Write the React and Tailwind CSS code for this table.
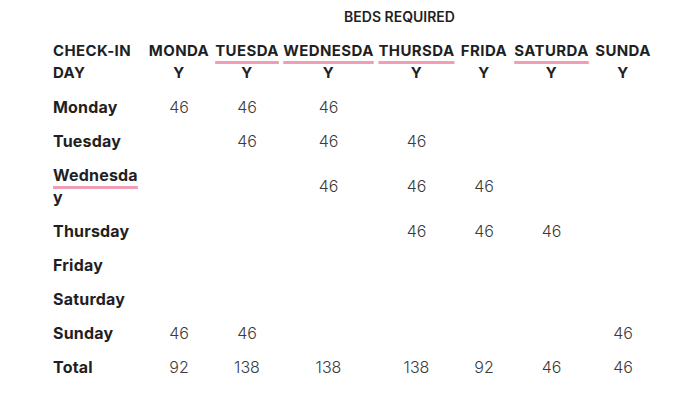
import React from "react";

const days = [
  { label: "MONDA", mark: false, w: "w-[68px]" },
  { label: "TUESDA", mark: true, w: "w-[68px]" },
  { label: "WEDNESDA", mark: true, w: "w-[95px]" },
  { label: "THURSDA", mark: true, w: "w-[81px]" },
  { label: "FRIDA", mark: false, w: "w-[54px]" },
  { label: "SATURDA", mark: true, w: "w-[81px]" },
  { label: "SUNDA", mark: false, w: "w-[62px]" },
];

const rows = [
  { day: "Monday", cells: [46, 46, 46, null, null, null, null] },
  { day: "Tuesday", cells: [null, 46, 46, 46, null, null, null] },
  { day: "Wednesday", cells: [null, null, 46, 46, 46, null, null] },
  { day: "Thursday", cells: [null, null, null, 46, 46, 46, null] },
  { day: "Friday", cells: [null, null, null, null, null, null, null] },
  { day: "Saturday", cells: [null, null, null, null, null, null, null] },
  { day: "Sunday", cells: [46, 46, null, null, null, null, 46] },
  { day: "Total", cells: [92, 138, 138, 138, 92, 46, 46] },
];

const squiggle = "underline decoration-[#ee9fb5] decoration-[3px] underline-offset-[5px]";

export default function App() {
  return (
    <div className="w-[687px] h-[401px] bg-white pl-[53px] font-['Inter',sans-serif] text-[#1f1f24]">
      <table className="table-fixed border-collapse">
        <colgroup>
          <col className="w-[92px]" />
          {days.map((d) => (
            <col key={d.label} className={d.w} />
          ))}
        </colgroup>
        <thead>
          <tr>
            <th />
            <th colSpan={7} className="py-[6px] leading-[22px] text-[14px] font-semibold text-center">
              BEDS REQUIRED
            </th>
          </tr>
          <tr className="text-[15px] font-bold tracking-[0.4px]">
            <th className="py-[6px] leading-[22px] text-left align-top">
              CHECK-IN
              <br />
              DAY
            </th>
            {days.map((d) => (
              <th key={d.label} className="py-[6px] leading-[22px] text-center whitespace-nowrap">
                <span className={d.mark ? squiggle : ""}>{d.label}</span>
                <br />Y
              </th>
            ))}
          </tr>
        </thead>
        <tbody>
          {rows.map((r) => (
            <tr key={r.day}>
              <td className="py-[6px] leading-[22px] text-[16px] font-bold tracking-[0.2px] text-left align-middle whitespace-nowrap">
                {r.day === "Wednesday" ? (
                  <>
                    <span className={squiggle}>Wednesda</span>
                    <br />y
                  </>
                ) : (
                  r.day
                )}
              </td>
              {r.cells.map((c, i) => (
                <td key={i} className="py-[6px] leading-[22px] text-[16px] font-light text-[#3c3c40] text-center align-middle">
                  {c}
                </td>
              ))}
            </tr>
          ))}
        </tbody>
      </table>
    </div>
  );
}
